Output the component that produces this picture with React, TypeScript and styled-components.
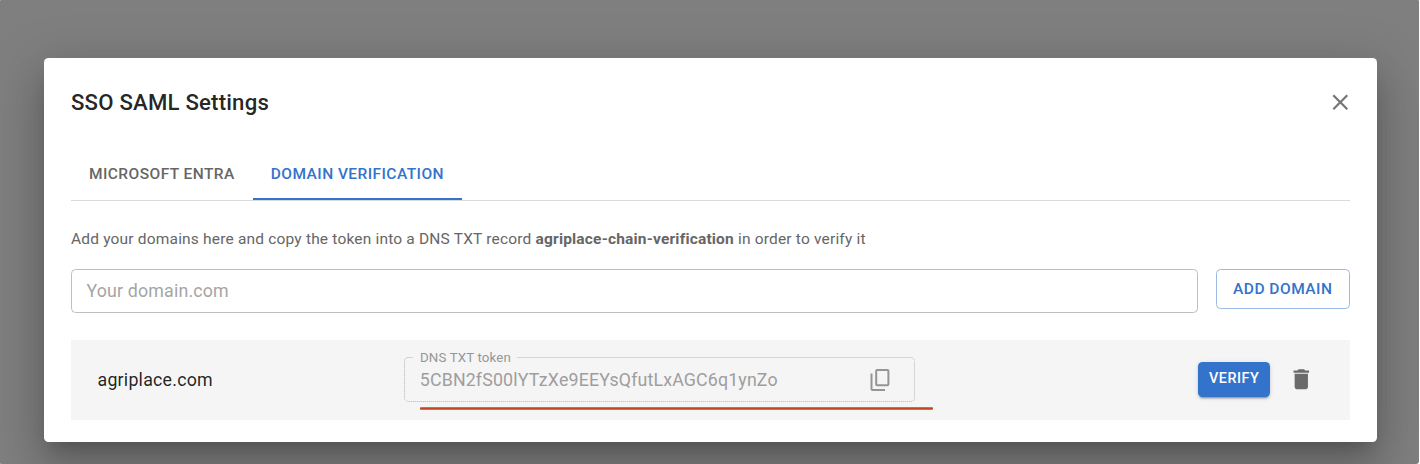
import React from "react";
import styled, { createGlobalStyle } from "styled-components";

const GlobalStyle = createGlobalStyle`
  *, *::before, *::after { box-sizing: border-box; }
  body {
    margin: 0;
    background: #fff;
    font-family: Roboto, "Liberation Sans", sans-serif;
    color: rgba(0, 0, 0, 0.87);
  }
  button, input { font-family: inherit; margin: 0; }
`;

const Backdrop = styled.div`
  width: 1419px;
  height: 464px;
  padding: 57.5px 42.5px 0 44.4px;
  background: #7f7f7f;
  border-radius: 1px 1px 3px 1px;
  overflow: hidden;
`;

const Dialog = styled.section`
  height: 384px;
  padding: 0 26.5px 0 26.6px;
  background: #fff;
  border-radius: 4.5px;
  box-shadow:
    0 12px 17px -8px rgba(0, 0, 0, 0.2),
    0 27px 42px 3px rgba(0, 0, 0, 0.14),
    0 10px 51px 9px rgba(0, 0, 0, 0.12);
`;

const Header = styled.header`
  display: flex;
  align-items: center;
  justify-content: space-between;
  height: 90px;
  padding-right: 0.5px;
`;

const Title = styled.h2`
  margin: 0;
  padding-bottom: 2px;
  font-size: 22.2px;
  font-weight: 500;
  letter-spacing: 0.19px;
  line-height: 36px;
`;

const IconButton = styled.button<{ $color?: string }>`
  display: flex;
  padding: 0;
  border: 0;
  background: none;
  color: ${(p) => p.$color ?? "#757575"};
`;

const CloseButton = styled(IconButton)`
  margin-right: -4px;
`;

const Tabs = styled.nav`
  display: flex;
  height: 53.5px;
  border-bottom: 1px solid #d9dadb;
`;

const Tab = styled.button<{ $active?: boolean }>`
  height: 52.5px;
  padding: 2px 18px 0;
  border: 0;
  border-bottom: 2px solid ${(p) => (p.$active ? "#3373cb" : "transparent")};
  background: none;
  color: ${(p) => (p.$active ? "#3373cb" : "#666")};
  font-size: 15.5px;
  font-weight: 500;
  letter-spacing: 0.44px;
  white-space: nowrap;
`;

const Hint = styled.p`
  margin: 25px 0 17px;
  color: #666;
  font-size: 15.5px;
  line-height: 26px;
  letter-spacing: 0.185px;
  b { font-weight: 700; }
`;

const AddForm = styled.div`
  display: flex;
  align-items: flex-start;
  gap: 18px;
`;

const DomainInput = styled.input`
  flex: 1;
  height: 44px;
  padding: 0 14.5px 2px;
  border: 1px solid #bfbfbf;
  border-radius: 4.5px;
  background: #fff;
  font-size: 17.8px;
  letter-spacing: 0.17px;
  outline: 0;
  &::placeholder { color: #a5a5a5; opacity: 1; }
`;

const OutlinedButton = styled.button`
  width: 134.5px;
  height: 40px;
  padding: 0;
  border: 1px solid #9bbae3;
  border-radius: 4.5px;
  background: #fff;
  color: #3373cb;
  font-size: 15.5px;
  font-weight: 500;
  letter-spacing: 0.5px;
`;

const DomainRow = styled.div`
  display: flex;
  align-items: center;
  height: 79.5px;
  margin-top: 27px;
  padding: 0 35px 0 26.5px;
  background: #f5f5f5;
`;

const DomainName = styled.span`
  width: 306.5px;
  font-size: 17.8px;
  letter-spacing: 0.23px;
`;

const TokenField = styled.div`
  position: relative;
  width: 511px;
  height: 44px;
`;

const TokenOutline = styled.fieldset`
  position: absolute;
  inset: -7px 0 0;
  margin: 0;
  padding: 0 8.5px;
  border: 1px dotted #b5b5b5;
  border-radius: 4.5px;
`;

const TokenLabel = styled.legend`
  padding: 0 6.5px;
  color: #959595;
  font-size: 13.3px;
  line-height: 14px;
  letter-spacing: 0.13px;
`;

const TokenContent = styled.div`
  display: flex;
  align-items: center;
  justify-content: space-between;
  height: 100%;
  padding: 0 23px 0 15.8px;
`;

const TokenValue = styled.span`
  padding-bottom: 1.5px;
  color: #9e9e9e;
  font-size: 17.8px;
  letter-spacing: 0.15px;
`;

const Underline = styled.i`
  position: absolute;
  top: 49px;
  left: 16px;
  width: 513px;
  height: 3px;
  border-radius: 1px;
  background: linear-gradient(#dc8468, #c24722 40%, #c24722 60%, #dc8468);
`;

const RowActions = styled.div`
  display: flex;
  align-items: center;
  gap: 18px;
  margin-left: auto;
`;

const VerifyButton = styled.button`
  width: 72.5px;
  height: 34.5px;
  margin-bottom: 1px;
  padding: 0 0 1.5px;
  border: 0;
  border-radius: 4.5px;
  background: #3373cb;
  color: #fff;
  font-size: 14.4px;
  font-weight: 500;
  letter-spacing: 0.5px;
  box-shadow:
    0 3px 1px -2px rgba(0, 0, 0, 0.2),
    0 2px 2px 0 rgba(0, 0, 0, 0.14),
    0 1px 5px 0 rgba(0, 0, 0, 0.12);
`;

const Glyph = ({ d, size }: { d: string; size: number }) => (
  <svg width={size} height={size} viewBox="0 0 24 24" fill="currentColor" aria-hidden>
    <path d={d} />
  </svg>
);

const icons = {
  close:
    "M19 6.41L17.59 5 12 10.59 6.41 5 5 6.41 10.59 12 5 17.59 6.41 19 12 13.41 17.59 19 19 17.59 13.41 12z",
  copy:
    "M19.4 .9H9.2c-1.1 0-2 .9-2 2v13.4c0 1.1.9 2 2 2h10.2c1.1 0 2-.9 2-2V2.9c0-1.1-.9-2-2-2zm0 15.4H9.2V2.9h10.2zM2.5 5.6v15.3c0 1.1.9 2 2 2H17v-2H4.5V5.6z",
  trash:
    "M6 19c0 1.1.9 2 2 2h8c1.1 0 2-.9 2-2V7H6v12zM19 4h-3.5l-1-1h-5l-1 1H5v2h14V4z",
};

export default function App() {
  return (
    <>
      <GlobalStyle />
      <Backdrop>
        <Dialog role="dialog">
          <Header>
            <Title>SSO SAML Settings</Title>
            <CloseButton aria-label="Close">
              <Glyph d={icons.close} size={26.6} />
            </CloseButton>
          </Header>
          <Tabs>
            <Tab>MICROSOFT ENTRA</Tab>
            <Tab $active>DOMAIN VERIFICATION</Tab>
          </Tabs>
          <Hint>
            Add your domains here and copy the token into a DNS TXT record{" "}
            <b>agriplace-chain-verification</b> in order to verify it
          </Hint>
          <AddForm>
            <DomainInput placeholder="Your domain.com" />
            <OutlinedButton>ADD DOMAIN</OutlinedButton>
          </AddForm>
          <DomainRow>
            <DomainName>agriplace.com</DomainName>
            <TokenField>
              <TokenOutline>
                <TokenLabel>DNS TXT token</TokenLabel>
              </TokenOutline>
              <TokenContent>
                <TokenValue>5CBN2fS00lYTzXe9EEYsQfutLxAGC6q1ynZo</TokenValue>
                <IconButton aria-label="Copy token" $color="#959595">
                  <Glyph d={icons.copy} size={24} />
                </IconButton>
              </TokenContent>
              <Underline />
            </TokenField>
            <RowActions>
              <VerifyButton>VERIFY</VerifyButton>
              <IconButton aria-label="Delete domain" $color="#6b6b6b">
                <Glyph d={icons.trash} size={26.6} />
              </IconButton>
            </RowActions>
          </DomainRow>
        </Dialog>
      </Backdrop>
    </>
  );
}
